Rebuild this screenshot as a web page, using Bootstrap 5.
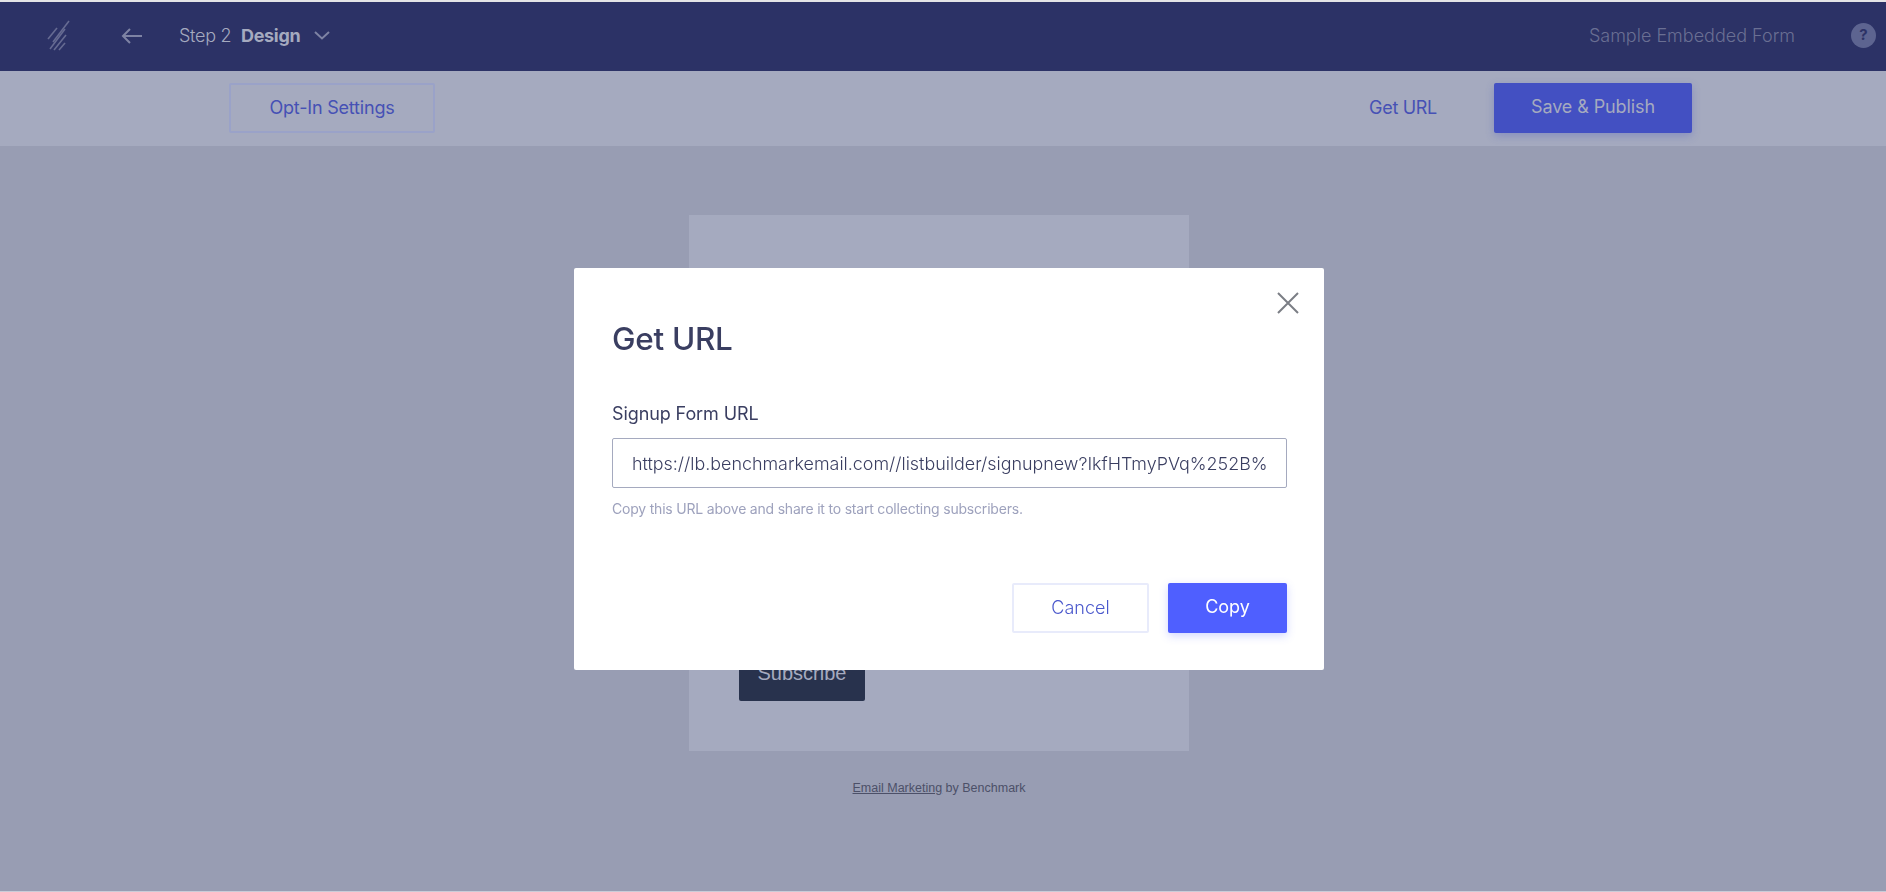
<!DOCTYPE html>
<html lang="en">
<head>
  <meta charset="UTF-8" />
  <meta name="viewport" content="width=device-width, initial-scale=1.0" />
  <title>Get URL</title>
  <link href="https://cdn.jsdelivr.net/npm/bootstrap@5.3.0/dist/css/bootstrap.min.css" rel="stylesheet">
  <style>
    html, body { height: 100%; }
    body {
      background-color: #989db3;
      font-family: Inter, "Liberation Sans", sans-serif;
      border-top: 2px solid #e4e4e6;
      border-bottom: 1px solid #c9ccd8;
      overflow: hidden;
    }
    .top-bar {
      height: 69px;
      background-color: #2c3266;
      padding: 0 10px 2px 47px;
      flex-wrap: nowrap;
    }
    .back-arrow { margin-left: 50px; }
    .step-text { margin-left: 37px; font-size: 18px; font-weight: 300; color: #a5aabf; letter-spacing: -.3px; }
    .step-text b { margin-left: 5px; font-weight: 700; color: #a5aabf; }
    .step-chevron { margin-left: 14px; }
    .form-name { font-size: 18px; font-weight: 300; color: #6a6f93; margin-right: 56px; }
    .help-dot {
      width: 25px; height: 25px; border-radius: 50%;
      background-color: #5d6490; color: #2c3266;
      font-size: 15px; font-weight: 700;
    }
    .sub-bar { height: 75px; background-color: #a5aabf; padding: 0 194px 1px 229px; }
    .btn-optin {
      width: 206px; height: 50px; padding: 0 0 2px;
      border: 2px solid #9aa2c8; border-radius: 2px;
      color: #4651b5; font-size: 18px; font-weight: 400; letter-spacing: -.2px;
    }
    .link-geturl { color: #4651b5; font-size: 18px; font-weight: 400; text-decoration: none; margin-right: 57px; padding-bottom: 2px; letter-spacing: -.3px; }
    .btn-publish {
      width: 198px; height: 50px; padding: 0 0 3px;
      background-color: #4350c2; color: #a5aabf; border: 0; border-radius: 2px;
      font-size: 18px; letter-spacing: -.1px; box-shadow: 0 3px 8px rgba(67,80,194,.3);
    }
    .form-preview {
      width: 500px; height: 536px; margin: 69px 0 0 689px;
      background-color: #a5aabf; padding: 436px 50px 0;
    }
    .btn-subscribe {
      width: 126px; height: 50px; padding: 0 0 6px;
      background-color: #28324d; color: #a5aabf; border: 0; border-radius: 2px;
      font-family: "Liberation Sans", sans-serif; font-size: 20px;
    }
    .form-credit { width: 500px; margin: 28px 0 0 689px; font-family: "Liberation Sans", sans-serif; font-size: 12.5px; color: #4c5068; }
    .form-credit a { color: #4c5068; }
    .modal-dialog.url-dialog { max-width: 750px; width: 750px; margin: 268px 0 0 574px; }
    .url-dialog .modal-content { height: 402px; border: 0; border-radius: 2px; padding: 51px 37px 0 38px; }
    .url-close { position: absolute; top: 24px; right: 25px; line-height: 0; }
    .url-title { font-size: 31.5px; font-weight: 500; color: #3a3e61; line-height: 40px; letter-spacing: -.3px; }
    .url-label { font-size: 18px; font-weight: 400; color: #3a3e61; margin: 43px 0 12px; line-height: 24px; letter-spacing: -.1px; }
    .url-input {
      height: 50px; padding: 0 14px 0 19px; border: 1px solid #a5aabf; border-radius: 2px;
      color: #3a3e61; font-size: 17.9px; font-weight: 300;
    }
    .url-help { font-size: 14px; font-weight: 400; color: #9ea2bd; margin-top: 11px; line-height: 20px; letter-spacing: -.2px; }
    .url-actions { margin-top: 64px; gap: 19px; }
    .btn-cancel {
      width: 137px; height: 50px; padding: 0 0 2px;
      border: 2px solid #e8ebfb; border-radius: 2px;
      color: #4a58cc; font-size: 18px; font-weight: 300;
    }
    .btn-copy {
      width: 119px; height: 50px; padding: 0 0 3px;
      background-color: #4f5fff; color: #fff; border: 0; border-radius: 2px;
      font-size: 18px; box-shadow: 0 3px 8px rgba(79,95,255,.25);
    }
  </style>
</head>
<body>
  <nav class="navbar top-bar">
    <div class="d-flex align-items-center">
      <svg width="24" height="32" viewBox="0 0 24 32" fill="none" stroke="#666b92" stroke-width="1.6">
        <path d="M22 1 6 22"/><path d="M18 9 3 29"/><path d="M10 8 1 19"/><path d="M19 15 7 30"/><path d="M18 23l-6 7"/>
      </svg>
      <svg class="back-arrow" width="21" height="16" viewBox="0 0 21 16" fill="none" stroke="#7e83a4" stroke-width="2">
        <path d="M21 8H2"/><path d="M9 1 2 8l7 7"/>
      </svg>
      <span class="step-text">Step 2 <b>Design</b></span>
      <svg class="step-chevron" width="16" height="9" viewBox="0 0 16 9" fill="none" stroke="#7e83a4" stroke-width="2">
        <path d="m1 1 7 6.500L15 1"/>
      </svg>
    </div>
    <div class="d-flex align-items-center">
      <span class="form-name">Sample Embedded Form</span>
      <span class="help-dot d-flex align-items-center justify-content-center">?</span>
    </div>
  </nav>

  <div class="sub-bar d-flex align-items-center justify-content-between">
    <button class="btn btn-optin" type="button">Opt-In Settings</button>
    <div class="d-flex align-items-center">
      <a class="link-geturl" href="#">Get URL</a>
      <button class="btn btn-publish" type="button">Save &amp; Publish</button>
    </div>
  </div>

  <div class="form-preview">
    <button class="btn btn-subscribe" type="button">Subscribe</button>
  </div>
  <div class="form-credit text-center"><a href="#">Email Marketing</a> by Benchmark</div>

  <div class="modal d-block" tabindex="-1">
    <div class="modal-dialog url-dialog">
      <div class="modal-content">
        <a class="url-close" href="#" aria-label="Close">
          <svg width="22" height="22" viewBox="0 0 22 22" fill="none" stroke="#7b7e85" stroke-width="2">
            <path d="M1 1l20 20M21 1 1 21"/>
          </svg>
        </a>
        <h2 class="url-title mb-0">Get URL</h2>
        <label class="url-label form-label d-block" for="signup-url">Signup Form URL</label>
        <input id="signup-url" class="form-control url-input" type="text" value="https://lb.benchmarkemail.com//listbuilder/signupnew?IkfHTmyPVq%252B%">
        <div class="url-help">Copy this URL above and share it to start collecting subscribers.</div>
        <div class="url-actions d-flex justify-content-end">
          <button class="btn btn-cancel" type="button">Cancel</button>
          <button class="btn btn-copy" type="button">Copy</button>
        </div>
      </div>
    </div>
  </div>

  <script src="https://cdn.jsdelivr.net/npm/bootstrap@5.3.0/dist/js/bootstrap.bundle.min.js"></script>
</body>
</html>
